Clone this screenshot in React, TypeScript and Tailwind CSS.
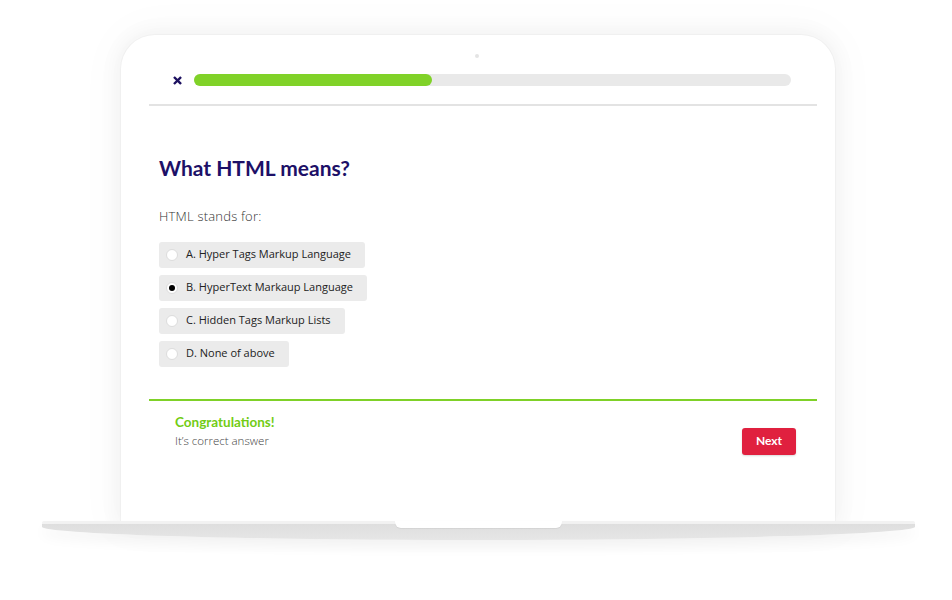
const options = [
  { label: "A. Hyper Tags Markup Language", checked: false },
  { label: "B. HyperText Markaup Language", checked: true },
  { label: "C. Hidden Tags Markup Lists", checked: false },
  { label: "D. None of above", checked: false },
]

function Radio({ checked }: { checked: boolean }) {
  return (
    <span className="flex h-[12px] w-[12px] shrink-0 items-center justify-center rounded-full border border-[#dcdcdc] bg-white">
      {checked && <span className="h-[6px] w-[6px] rounded-full bg-black" />}
    </span>
  )
}

export default function App() {
  return (
    <div className="h-[600px] w-[952px] overflow-hidden bg-white pt-[35px]">
      {/* Screen */}
      <div className="ml-[121px] flex h-[486px] w-[714px] flex-col rounded-t-[34px] bg-white pl-[28px] pr-[18px] shadow-[0_0_0_1px_rgba(0,0,0,0.025),0_0_18px_6px_rgba(0,0,0,0.035),0_0_40px_14px_rgba(0,0,0,0.02)]">
        {/* Camera */}
        <div className="mt-[19px] ml-[326px] h-[4px] w-[4px] rounded-full bg-[#e4e4e4]" />

        {/* Progress */}
        <div className="mt-[16px] flex items-center pl-[24px] pr-[26px]">
          <svg width="9" height="9" viewBox="0 0 10 10" aria-hidden="true">
            <path d="M2 2L8 8M8 2L2 8" stroke="#1d1160" strokeWidth="2.6" strokeLinecap="square" />
          </svg>
          <div className="ml-[12px] h-[12px] flex-1 rounded-full bg-[#e9e9e9]">
            <div className="h-full w-[238px] rounded-full bg-[#80d228]" />
          </div>
        </div>

        <div className="mt-[18px] h-[1.5px] bg-[#e3e3e3]" />

        {/* Question */}
        <div className="pl-[10px] font-['Open_Sans',sans-serif]">
          <h1 className="mt-[48px] font-['Lato',sans-serif] text-[21px] font-bold leading-[28px] text-[#1d1067]">
            What HTML means?
          </h1>
          <p className="mt-[24px] text-[13px] font-light leading-[20px] tracking-[0.2px] text-[#333]">HTML stands for:</p>

          <div className="mt-[16px] flex flex-col items-start gap-[7px]">
            {options.map((o) => (
              <div
                key={o.label}
                className="flex h-[26px] items-center gap-[8px] rounded-[3px] bg-[#ebebeb] pl-[7px] pr-[14px] text-[11px] font-medium text-[#222]"
              >
                <Radio checked={o.checked} />
                <span>{o.label}</span>
              </div>
            ))}
          </div>
        </div>

        <div className="mt-[32px] h-[2px] bg-[#7fd128]" />

        {/* Feedback */}
        <div className="flex items-start justify-between pl-[26px] pr-[21px] pt-[11px]">
          <div>
            <div className="font-['Lato',sans-serif] text-[13.5px] font-bold leading-[20px] text-[#72cc15]">
              Congratulations!
            </div>
            <div className="font-['Open_Sans',sans-serif] text-[11.5px] font-light leading-[18px] text-[#444]">
              It’s correct answer
            </div>
          </div>
          <button className="mt-[16px] h-[27px] w-[54px] rounded-[3px] bg-[#e0203f] font-['Lato',sans-serif] text-[12px] font-bold text-white shadow-[0_1px_2px_rgba(0,0,0,0.15)]">
            Next
          </button>
        </div>
      </div>

      {/* Base */}
      <div className="relative ml-[42px] h-[19px] w-[873px]">
        <div className="h-[3px] rounded-t-[2px] bg-[#f3f3f3]" />
        <div className="h-[16px] rounded-b-[60%_100%] bg-gradient-to-b from-[#dedede] to-[#e6e6e6] shadow-[0_6px_14px_rgba(0,0,0,0.06)]" />
        <div className="absolute left-[353px] top-0 h-[7px] w-[167px] rounded-b-[6px] bg-white shadow-[0_1px_1px_rgba(0,0,0,0.06)]" />
      </div>
    </div>
  )
}
